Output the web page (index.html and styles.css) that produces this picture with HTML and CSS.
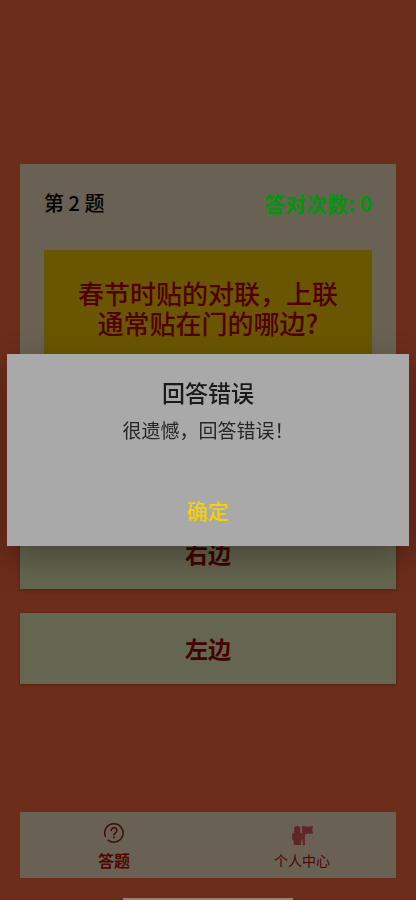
FILE: index.html
```html
<!doctype html>
<html lang="zh-CN">
<head>
    <meta charset="UTF-8">
    <meta name="viewport" content="width=device-width, initial-scale=1.0">
    <title>答题</title>
    <link rel="stylesheet" href="styles.css">
</head>
<body>
<div class="page">
    <main class="quiz">
        <section class="card">
            <div class="cardHeader">
                <span class="number">第 2 题</span>
                <span class="score">答对次数: 0</span>
            </div>
            <h1 class="question">春节时贴的对联，上联通常贴在门的哪边?</h1>
        </section>
        <button class="option">右边</button>
        <button class="option">左边</button>
    </main>
    <nav class="tabs">
        <a href="#quiz" class="tab active">
            <svg viewBox="0 0 22 22" width="22" height="22" fill="none" stroke="currentColor" stroke-width="1.5" stroke-linecap="round">
                <path d="M2.300 14.300A9.200 9.200 0 1 1 5.200 18.200"/>
                <path d="M8.300 8.500a2.800 2.800 0 1 1 4.300 2.300c-1 .7-1.500 1.200-1.500 2.200"/>
                <circle cx="11" cy="15.500" r="1" fill="currentColor" stroke="none"/>
            </svg>
            <span>答题</span>
        </a>
        <a href="#profile" class="tab">
            <svg viewBox="0 -2 22 22" width="22" height="22" fill="currentColor" overflow="visible">
                <path d="M3 5Q3 2 6.200 2T9.400 5L9 8.500q1.500.5 2 1.500V2h2q2 1 4.500.5t4.500-.5l-.8 3.700L22 9.500q-3 .5-5 .3t-3 .7V21h-2.400V15L10 17v4H2.800V17L1 15v-4Q1 9.500 3.300 8.500z"/>
            </svg>
            <span>个人中心</span>
        </a>
    </nav>
    <div class="homeBar"></div>
</div>
<div class="overlay">
    <div class="dialog" role="alertdialog" aria-labelledby="dialogTitle" aria-describedby="dialogText">
        <h2 id="dialogTitle">回答错误</h2>
        <p id="dialogText">很遗憾，回答错误！</p>
        <button class="confirm">确定</button>
    </div>
</div>
</body>
</html>
```
FILE: styles.css
```css
* {
    box-sizing: border-box;
}

body {
    margin: 0;
    background: #6c2d1b;
    font-family: "Noto Sans CJK SC", sans-serif;
}

.page {
    display: flex;
    flex-direction: column;
    min-height: 100vh;
    padding: 0 20px;
}

.quiz {
    flex: 1;
    display: flex;
    flex-direction: column;
    justify-content: center;
    gap: 24px;
    padding-top: 36px;
}

.card {
    padding: 24px 24px 32px;
    background: #696153;
}

.cardHeader {
    display: flex;
    justify-content: space-between;
    margin-bottom: 32px;
    font-size: 20px;
    line-height: 30px;
}

.number {
    color: #000;
    font-weight: 500;
}

.score {
    color: #00970e;
    font-size: 21px;
    font-weight: 700;
}

.question {
    margin: 0;
    padding: 28px 32px;
    min-height: 212px;
    background: #6a5600;
    color: #510000;
    font-size: 26px;
    font-weight: 500;
    line-height: 30px;
    text-align: center;
}

button {
    border: none;
    font-family: inherit;
    cursor: pointer;
}

.option {
    height: 71px;
    padding: 0 0 2px;
    background: #656650;
    color: #450000;
    font-size: 23px;
    font-weight: 700;
    box-shadow: 0 1px 3px #00000040;
}

.tabs {
    display: flex;
    margin-bottom: 20px;
    background: #696153;
}

.tab {
    flex: 1;
    display: flex;
    flex-direction: column;
    align-items: center;
    gap: 4px;
    padding: 10px 0 6px;
    color: #500505;
    font-size: 14px;
    line-height: 24px;
    text-decoration: none;
}

.tab svg {
    color: #5e2725;
}

.tab.active {
    font-size: 16px;
    font-weight: 700;
}

.tab.active svg {
    color: #400c08;
}

.homeBar {
    align-self: center;
    width: 170px;
    height: 2px;
    background: #a17e76;
}

.overlay {
    position: fixed;
    inset: 0;
    display: flex;
    align-items: center;
    padding: 0 7px;
}

.dialog {
    flex: 1;
    display: flex;
    flex-direction: column;
    align-items: center;
    padding: 20px 24px;
    background: #a9a9a9;
    box-shadow: 0 12px 32px #00000050;
}

.dialog h2 {
    margin: 0;
    color: #1a1a1a;
    font-size: 23px;
    font-weight: 500;
    line-height: 36px;
}

.dialog p {
    margin: 4px 0 48px;
    color: #252525;
    font-size: 19px;
    font-weight: 400;
    line-height: 32px;
}

.confirm {
    padding: 0 16px;
    background: none;
    color: #fad000;
    font-size: 21px;
    font-weight: 500;
    line-height: 32px;
}
```
